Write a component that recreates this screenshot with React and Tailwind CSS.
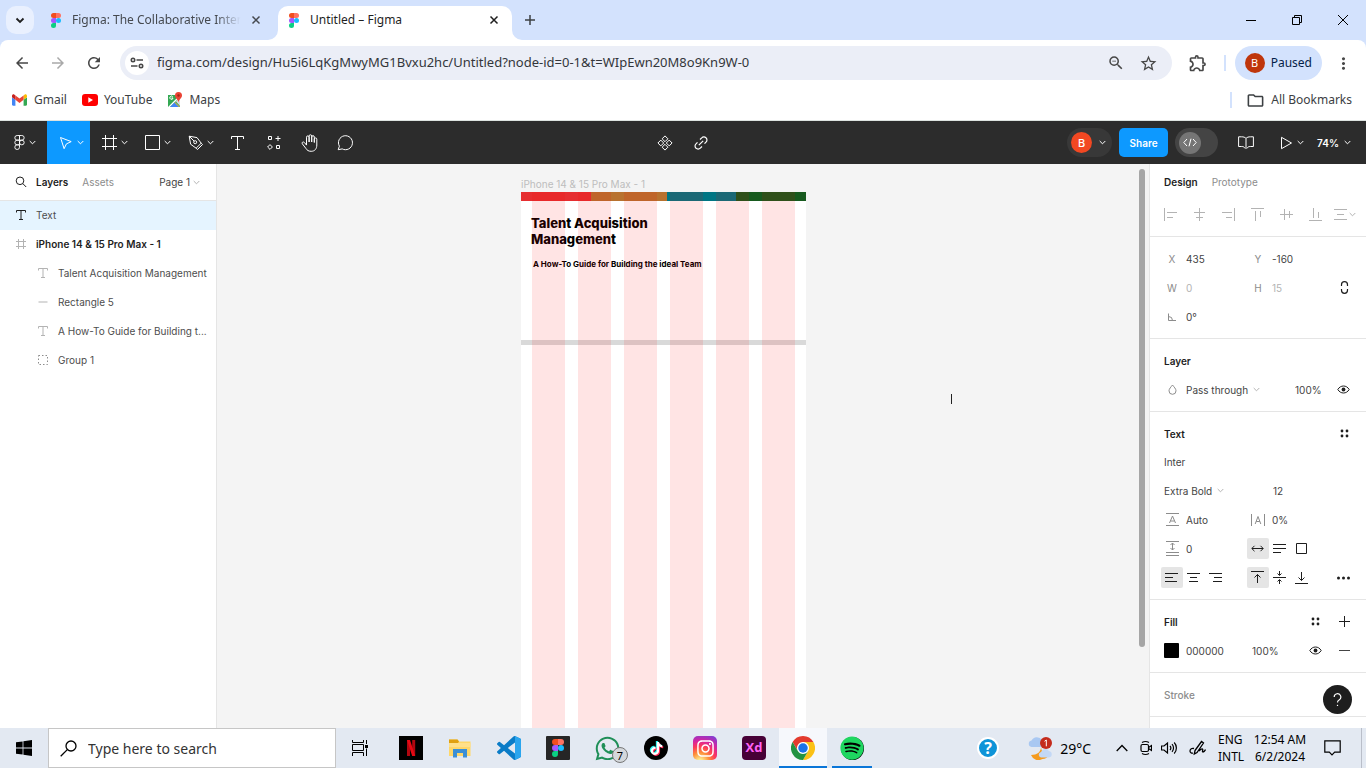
import React from "react";
import {
  MdArrowBack, MdArrowForward, MdRefresh, MdStarBorder, MdZoomOut, MdOutlineExtension,
  MdMoreVert, MdOutlineFolder,
} from "react-icons/md";
import { FaWhatsapp, FaTiktok, FaInstagram, FaSpotify } from "react-icons/fa";

/* ---------- shared drawings ---------- */

function Icon({ w = 16, h = w, children, className = "", sw = 1, box }) {
  return (
    <svg
      width={w}
      height={h}
      viewBox={box || `0 0 ${w} ${h}`}
      fill="none"
      stroke="currentColor"
      strokeWidth={sw}
      aria-hidden="true"
      className={`shrink-0 ${className}`}
    >
      {children}
    </svg>
  );
}

const figmaParts = [
  ["M0 9.5A9.5 9.5 0 0 0 9.5 19H19V0H9.5A9.5 9.5 0 0 0 0 9.5z", "#F24E1E"],
  ["M19 0v19h9.5a9.5 9.5 0 1 0 0-19H19z", "#FF7262"],
  ["M0 28.5A9.5 9.5 0 0 0 9.5 38H19V19H9.5A9.5 9.5 0 0 0 0 28.5z", "#A259FF"],
  ["M19 28.5a9.5 9.5 0 1 1 19 0 9.5 9.5 0 0 1-19 0z", "#1ABCFE"],
  ["M0 47.5A9.5 9.5 0 0 1 9.5 38H19v9.5a9.5 9.5 0 1 1-19 0z", "#0ACF83"],
];

function FigmaLogo({ w = 10, h = 15 }) {
  return (
    <Icon w={w} h={h} box="0 0 38 57">
      {figmaParts.map(([d, c]) => <path key={c} d={d} fill={c} stroke="none" />)}
    </Icon>
  );
}

function Chev({ className = "" }) {
  return <Icon w={7} h={5} className={className}><path d="M.7 1l2.8 2.8L6.3 1" /></Icon>;
}

function Cross() {
  return <Icon w={10} sw={1.5}><path d="M1.5 1.5l7 7M8.5 1.5l-7 7" /></Icon>;
}

function TypeIcon({ className = "" }) {
  return (
    <Icon w={12} h={12} className={className}>
      <path d="M1.5 3.5v-2h9v2M6 1.5v9M4 10.5h4" />
    </Icon>
  );
}

function Eye() {
  return (
    <Icon w={13} h={9}>
      <path d="M.8 4.5C2.2 2.2 4.2 1 6.500 1s4.300 1.200 5.700 3.500C10.800 6.800 8.800 8 6.500 8S2.200 6.800.800 4.500z" />
      <circle cx="6.500" cy="4.500" r="1.900" fill="currentColor" stroke="none" />
    </Icon>
  );
}

function FourDots() {
  return (
    <Icon w={9} h={9}>
      <g fill="currentColor" stroke="none">
        <circle cx="2" cy="2" r="1.4" /><circle cx="7" cy="2" r="1.4" />
        <circle cx="2" cy="7" r="1.4" /><circle cx="7" cy="7" r="1.4" />
      </g>
    </Icon>
  );
}

/* ---------- browser ---------- */

function TabStrip() {
  return (
    <div className="flex h-10 bg-[#d3e2fd] text-[12px] text-[#1f1f1f]">
      <button aria-label="Search tabs" className="ml-1.5 mt-1.5 flex size-7 items-center justify-center rounded-[10px] bg-[#e9f0fe]">
        <Icon w={10} h={7} sw={1.8}><path d="M1.500 1.500L5 5l3.500-3.500" /></Icon>
      </button>
      <div className="mt-1.5 flex h-7 w-[234px] items-center pl-[17px] pr-[7px]">
        <FigmaLogo />
        <span className="ml-[11px] w-[172px] whitespace-nowrap text-[#45494f] [mask-image:linear-gradient(to_right,black_84%,transparent_98%)]">
          Figma: The Collaborative Inter
        </span>
        <button aria-label="Close tab" className="ml-auto text-[#45494f]"><Cross /></button>
      </div>
      <Icon w={10} h={10} className="mt-[30px]"><path d="M10 0v10H0A10 10 0 0 0 10 0z" fill="white" stroke="none" /></Icon>
      <div className="mt-1.5 flex w-[234px] items-center rounded-t-[10px] bg-white pb-1.5 pl-[11px] pr-[13px]">
        <FigmaLogo />
        <span className="ml-[11px] whitespace-nowrap">Untitled – Figma</span>
        <button aria-label="Close tab" className="ml-auto"><Cross /></button>
      </div>
      <Icon w={10} h={10} className="mt-[30px]"><path d="M0 0v10h10A10 10 0 0 1 0 0z" fill="white" stroke="none" /></Icon>
      <button aria-label="New tab" className="flex w-4 items-center justify-center text-[#3c4043]">
        <Icon w={12} sw={1.500}><path d="M6 1v10M1 6h10" /></Icon>
      </button>
      <div className="ml-auto flex text-black">
        <button aria-label="Minimise" className="flex w-[46px] items-center justify-center"><Icon w={10}><path d="M0 5.500h10" /></Icon></button>
        <button aria-label="Restore" className="flex w-[46px] items-center justify-center">
          <Icon w={10}><path d="M.5 2.500h7v7h-7zM2.500 2.500v-2h7v7h-2" /></Icon>
        </button>
        <button aria-label="Close" className="flex w-[46px] items-center justify-center"><Icon w={10}><path d="M0 0l10 10M10 0L0 10" /></Icon></button>
      </div>
    </div>
  );
}

function AddressRow() {
  return (
    <div className="flex bg-[#d3e2fd]">
      <div className="flex h-[46px] min-w-0 flex-1 items-center rounded-t-lg bg-white pl-[13px] text-[#474747]">
        <button aria-label="Back" className="w-9"><MdArrowBack size={18} /></button>
        <button aria-label="Forward" className="w-9 text-[#a9a9a9]"><MdArrowForward size={18} /></button>
        <button aria-label="Reload" className="w-[35px]"><MdRefresh size={18} /></button>
        <div className="flex h-[34px] min-w-0 flex-1 items-center rounded-full bg-[#ebeef7] pl-[5px] pr-3.5">
          <button aria-label="Site information" className="flex size-6 items-center justify-center rounded-full bg-white">
            <Icon w={14} h={12} sw={1.600}>
              <circle cx="3" cy="3" r="1.700" /><path d="M6.500 3H13M1 9h6.500" /><circle cx="11" cy="9" r="1.700" />
            </Icon>
          </button>
          <input
            aria-label="Address"
            className="ml-2 min-w-0 flex-1 bg-transparent text-[13px] text-[#33363b] outline-none"
            defaultValue="figma.com/design/Hu5i6LqKgMwyMG1Bvxu2hc/Untitled?node-id=0-1&t=WIpEwn20M8o9Kn9W-0"
          />
          <button aria-label="Zoom" className="mr-3.5"><MdZoomOut size={18} /></button>
          <button aria-label="Bookmark this page"><MdStarBorder size={19} /></button>
        </div>
        <button aria-label="Extensions" className="ml-4 mr-4"><MdOutlineExtension size={20} /></button>
        <span className="h-4 w-0.5 bg-[#d3e2fd]" />
        <button className="ml-[9px] flex h-[34px] items-center gap-1.5 rounded-full bg-[#d3e2fd] px-2.5 text-[12px] text-[#041e49]">
          <span className="flex size-5 items-center justify-center rounded-full bg-[#bf360c] text-[11px] text-white">B</span>
          Paused
        </button>
        <button aria-label="Menu" className="ml-3 mr-[13px]"><MdMoreVert size={19} /></button>
      </div>
    </div>
  );
}

function Bookmarks() {
  return (
    <div className="flex h-[35px] items-center border-b border-[#dde3e0] bg-white pb-1.5 pl-3 pr-3.5 text-[12px] text-[#3c4043]">
      <a href="#gmail" className="flex items-center gap-[7px]">
        <Icon w={15} h={12} box="52 42 88 66">
          <g stroke="none">
            <path fill="#4285f4" d="M58 108h14V74L52 59v43c0 3.320 2.690 6 6 6" />
            <path fill="#34a853" d="M120 108h14c3.320 0 6-2.690 6-6V59l-20 15" />
            <path fill="#fbbc04" d="M120 48v26l20-15v-8c0-7.420-8.470-11.650-14.400-7.200" />
            <path fill="#ea4335" d="M72 74V48l24 18 24-18v26L96 92" />
            <path fill="#c5221f" d="M52 51v8l20 15V48l-5.600-4.200c-5.940-4.450-14.400-.220-14.400 7.200" />
          </g>
        </Icon>
        Gmail
      </a>
      <a href="#youtube" className="ml-[15px] flex items-center gap-1.5">
        <Icon w={16} h={12}><rect width="16" height="12" rx="3" fill="#f00" stroke="none" /><path d="M6.300 3.300v5.400L11 6z" fill="#fff" stroke="none" /></Icon>
        YouTube
      </a>
      <a href="#maps" className="ml-[15px] flex items-center gap-1.5">
        <Icon w={16} h={16}>
          <g stroke="none">
            <path d="M1 3h12v12H1z" fill="#34a853" />
            <path d="M1 15L13 3v2L3 15z" fill="#fff" />
            <path d="M3 15l5-5 5 5z" fill="#4285f4" />
            <path d="M13 5v9L9 9.500z" fill="#dadce0" />
            <path d="M8 10l5 5h-1L7.500 10.500z" fill="#fbbc04" />
            <path d="M11.500 0a3.500 3.500 0 0 0-3.500 3.500C8 6.200 11 7 11.500 10.500 12 7 15 6.200 15 3.500A3.500 3.500 0 0 0 11.500 0z" fill="#ea4335" />
            <circle cx="11.500" cy="3.500" r="1.200" fill="#a52714" />
          </g>
          <path d="M5.800 4.900a1.600 1.600 0 1 0 .2 1.100H4.500" stroke="#fff" />
        </Icon>
        Maps
      </a>
      <span className="ml-auto h-4 w-0.5 bg-[#d3e2fd]" />
      <a href="#bookmarks" className="ml-3.5 flex items-center gap-1.5">
        <MdOutlineFolder size={19} />
        All Bookmarks
      </a>
    </div>
  );
}

/* ---------- editor toolbar ---------- */

function Tool({ label, className = "", chev, children }) {
  return (
    <button aria-label={label} className={`flex h-full items-center justify-center text-white ${className}`}>
      {children}
      {chev && <Chev className="ml-1" />}
    </button>
  );
}

function Toolbar() {
  return (
    <div className="flex h-[43px] bg-[#2c2c2c] text-[10px] text-white">
      <div className="flex flex-1">
        <Tool label="Main menu" chev className="w-[47px] pl-0.5">
          <Icon w={11} h={15} box="-2 -2 42 61" sw={3.800}>
            {figmaParts.map(([d, c]) => <path key={c} d={d} />)}
          </Icon>
        </Tool>
        <Tool label="Move" chev className="w-[43px] bg-[#0d99ff] pl-1.5">
          <Icon w={14}><path d="M1.500 1.500l3.600 11.200 2.300-4.800 4.800-2.300z" /></Icon>
        </Tool>
        <Tool label="Frame" chev className="w-[43px] pl-1.5">
          <Icon w={15}><path d="M3.500 0v15M11.500 0v15M0 3.500h15M0 11.500h15" /></Icon>
        </Tool>
        <Tool label="Rectangle" chev className="w-[43px] pl-1.5">
          <Icon w={15}><path d="M.5.5h14v14H.5z" /></Icon>
        </Tool>
        <Tool label="Pen" chev className="w-[43px] pl-1.5">
          <Icon w={15}>
            <path d="M1.200 1.200l1.400 8 5.500 4 5.100-5-4.200-5.600z" />
            <path d="M8.100 13.200l1.400 1.300 5-5-1.300-1.300M1.200 1.200l5 5" />
            <circle cx="7.200" cy="7.200" r="1.500" />
          </Icon>
        </Tool>
        <Tool label="Text" className="w-9">
          <Icon w={13} h={16}><path d="M.5 4V1.500h12V4M6.500 1.500v13M4 14.500h5" /></Icon>
        </Tool>
        <Tool label="Resources" className="w-9 pl-0.5">
          <Icon w={14}>
            <path d="M1.500.5h3v3h-3zM9.500 9.500h3v3h-3zM11 0v5M8.500 2.500h5M3 8.600L5.400 11 3 13.400.6 11z" />
          </Icon>
        </Tool>
        <Tool label="Hand tool" className="w-9">
          <Icon w={17} h={18}>
            <path d="M5.500 9.500V3.200a1.300 1.300 0 0 1 2.600 0V8M8.100 8V2.100a1.300 1.300 0 0 1 2.600 0V8M10.700 8V3a1.300 1.300 0 0 1 2.600 0v5.500M13.300 8.500V5.200a1.250 1.250 0 0 1 2.500 0V11c0 3.800-2 6.300-5.600 6.300-2.700 0-4.200-1-5.400-3L1.300 9.800c-.8-1.500 1-2.500 2.100-1.300l2.100 2.600V8" />
          </Icon>
        </Tool>
        <Tool label="Comment" className="w-9">
          <Icon w={17} h={16}>
            <path d="M1.200 14.700l1.200-3.500A7 7 0 1 1 5.200 13.900z" />
          </Icon>
        </Tool>
      </div>
      <div className="flex">
        <Tool label="Component" className="w-9">
          <Icon w={16}>
            <path d="M8 .9l2.900 2.900L8 6.700 5.100 3.800zM8 9.300l2.900 2.900L8 15.100l-2.900-2.900zM3.800 5.100L6.700 8l-2.900 2.900L.9 8zM12.200 5.100L15.100 8l-2.900 2.900L9.300 8z" />
          </Icon>
        </Tool>
        <Tool label="Link" className="w-9">
          <Icon w={14} sw={1.200}>
            <path d="M6 3.500l1.700-1.700a2.900 2.900 0 0 1 4.300 0 2.900 2.900 0 0 1 0 4.300L10.500 7.700M8 10.500l-1.700 1.700a2.900 2.900 0 0 1-4.300 0 2.900 2.900 0 0 1 0-4.300l1.500-1.600M4.800 9.200l4.400-4.400" />
          </Icon>
        </Tool>
      </div>
      <div className="flex flex-1 items-center justify-end">
        <button aria-label="Account" className="mr-[7px] flex h-[29px] w-[45px] items-center rounded-full bg-[#383838] pl-1">
          <span className="flex size-[21px] items-center justify-center rounded-full bg-[#f24822] text-[11px] font-medium">B</span>
          <Chev className="ml-[7px]" />
        </button>
        <button className="mr-[7px] h-[29px] w-[49px] rounded-[5px] bg-[#0d99ff] font-semibold">Share</button>
        <button role="switch" aria-checked="false" aria-label="Dev Mode" className="flex h-[29px] w-[43px] items-center rounded-full bg-[#444] pl-1">
          <span className="flex size-[22px] items-center justify-center rounded-full bg-[#757575]">
            <Icon w={14} h={9}><path d="M4 1L.8 4.500 4 8M10 1l3.200 3.500L10 8M8 .7l-2 7.600" /></Icon>
          </span>
        </button>
        <Tool label="Libraries" className="ml-2.5 w-9">
          <Icon w={16} h={13}>
            <path d="M8 2.500C7 1.200 5.500.8 3.500.8H.6v9.700h3.100c1.800 0 2.300.4 3 1.500h2.600c.7-1.100 1.200-1.500 3-1.500h3.100V.8h-2.900C10.500.8 9 1.200 8 2.500zM8 2.500V11" />
          </Icon>
        </Tool>
        <Tool label="Present" chev className="ml-1.5 w-[43px]">
          <Icon w={13} h={14}><path d="M1.500 1.300v11.400L11.500 7z" /></Icon>
        </Tool>
        <button className="ml-1 mr-[15px] flex items-center gap-[5px] font-semibold">
          74% <Chev />
        </button>
      </div>
    </div>
  );
}

/* ---------- layers ---------- */

const layers = [
  { name: "Text", kind: "type", active: true },
  { name: "iPhone 14 & 15 Pro Max - 1", kind: "frame", strong: true },
  { name: "Talent Acquisition Management", kind: "type", child: true },
  { name: "Rectangle 5", kind: "line", child: true },
  { name: "A How-To Guide for Building t...", kind: "type", child: true },
  { name: "Group 1", kind: "group", child: true },
];

function LayerIcon({ kind, active }) {
  const tone = active ? "text-[#1e1e1e]" : "text-[#b3b3b3]";
  if (kind === "type") return <TypeIcon className={tone} />;
  if (kind === "frame") return <Icon w={12} className={tone}><path d="M3.500 1v10M8.500 1v10M1 3.500h10M1 8.500h10" /></Icon>;
  if (kind === "line") return <Icon w={12} className={tone}><path d="M1.500 6h9" /></Icon>;
  return <Icon w={12} className="text-[#8c8c8c]"><path strokeDasharray="1.500 2" d="M1.500 1.500h9v9h-9z" /></Icon>;
}

function LayersPanel() {
  return (
    <aside className="w-[217px] shrink-0 border-r border-[#e5e5e5] bg-white">
      <div className="flex h-[37px] items-center border-b border-[#e5e5e5] pl-[15px] pr-4">
        <button aria-label="Find">
          <Icon w={12} className="text-[#1e1e1e]"><circle cx="5" cy="4.800" r="3.800" /><path d="M7.800 7.600l3.400 3.400" /></Icon>
        </button>
        <button className="ml-[9px] font-semibold text-[#1e1e1e]">Layers</button>
        <button className="ml-3.5 text-[#8c8c8c]">Assets</button>
        <button className="ml-auto flex items-center gap-[3px] text-[#444]">
          Page 1 <Chev className="text-[#b3b3b3]" />
        </button>
      </div>
      <ul className="grid h-[173px] grid-rows-6">
        {layers.map((l) => (
          <li key={l.name} className="min-w-0">
            <button
              className={`flex h-full w-full items-center gap-[9px] whitespace-nowrap text-left ${l.child ? "pl-[37px]" : "pl-[15px]"} ${l.active ? "bg-[#e5f4ff]" : ""} ${l.strong ? "font-semibold text-[#1e1e1e]" : "text-[#4d4d4d]"}`}
            >
              <LayerIcon kind={l.kind} active={l.active} />
              {l.name}
            </button>
          </li>
        ))}
      </ul>
    </aside>
  );
}

/* ---------- canvas ---------- */

function Canvas() {
  return (
    <main className="relative min-w-0 flex-1 overflow-hidden bg-[#f4f4f4] font-['Inter',sans-serif]">
      <div className="absolute left-[304px] top-[13px] whitespace-nowrap text-[10px] leading-[15px] text-[#bdbdbd]">iPhone 14 & 15 Pro Max - 1</div>
      <section className="absolute bottom-0 left-[304px] top-7 w-[285px] bg-white">
        <div className="flex h-[9px]">
          <span className="w-[70px] bg-[#e62e30]" />
          <span className="w-[76px] bg-[#b8722f]" />
          <span className="w-[69px] bg-[#007583]" />
          <span className="flex-1 bg-[#175a1e]" />
        </div>
        <h1 className="ml-2.5 mt-3.5 w-40 text-[13px] font-extrabold leading-4 text-black">Talent Acquisition Management</h1>
        <p className="ml-3 mt-[9px] whitespace-nowrap text-[8px] font-bold leading-4 text-black">A How-To Guide for Building the ideal Team</p>
        <div className="mt-[68px] h-[5px] bg-[#d9d9d9]" />
        <div className="absolute inset-0 flex gap-[13px] pl-[11px]">
          {[0, 1, 2, 3, 4, 5].map((i) => <span key={i} className="w-[33px] bg-[rgba(255,0,0,0.105)]" />)}
        </div>
      </section>
      <span className="absolute left-[734px] top-[230px] h-2.5 w-px bg-[#222]" />
      <span className="absolute right-1 top-[5px] h-[478px] w-1.5 rounded-full bg-[#a6a6a6]" />
    </main>
  );
}

/* ---------- design panel ---------- */

function Row({ children, className = "" }) {
  return <div className={`flex h-[29px] items-center ${className}`}>{children}</div>;
}

function Section({ children }) {
  return <section className="border-b border-[#e5e5e5] py-[7px] pl-3.5 pr-4">{children}</section>;
}

function Field({ id, mark, label, value, dim, className = "" }) {
  return (
    <div className={`flex w-[86px] items-center ${className}`}>
      <label htmlFor={id} aria-label={label} className="flex w-4 shrink-0 justify-center text-[#8c8c8c]">{mark}</label>
      <input id={id} defaultValue={value} className={`ml-1.5 w-12 bg-transparent outline-none ${dim ? "text-[#b3b3b3]" : "text-[#444]"}`} />
    </div>
  );
}

function SmallSelect({ label, value }) {
  return (
    <span className="flex items-center gap-1">
      <select aria-label={label} className="appearance-none bg-transparent text-[#444] outline-none">
        <option>{value}</option>
      </select>
      <Chev className="text-[#b3b3b3]" />
    </span>
  );
}

function Seg({ label, d, on }) {
  return (
    <button aria-label={label} aria-pressed={!!on} className={`flex h-[21px] w-[22px] items-center justify-center rounded-[2px] pr-px ${on ? "bg-[#e5e5e5]" : ""}`}>
      <Icon w={13}><path d={d} /></Icon>
    </button>
  );
}

const aligns = [
  ["Align left", "M.5 0v13M3 4.500h10M3 9.500h6"],
  ["Align horizontal centers", "M6.500 0v13M1 4.500h11M3 9.500h7"],
  ["Align right", "M12.500 0v13M0 4.500h10M4 9.500h6"],
  ["Align top", "M0 .5h13M4.500 3v10M9.500 3v6"],
  ["Align vertical centers", "M0 6.500h13M4.500 1v11M9.500 3v7"],
  ["Align bottom", "M0 12.500h13M4.500 0v10M9.500 4v6"],
];

function DesignPanel() {
  return (
    <aside className="relative w-[217px] shrink-0 overflow-hidden border-l border-[#e5e5e5] bg-white text-[#444]">
      <div className="flex h-9 items-center gap-3.5 pl-3.5">
        <button className="font-semibold text-[#1e1e1e]">Design</button>
        <button className="text-[#8c8c8c]">Prototype</button>
      </div>
      <div className="flex h-[37px] items-start gap-4 border-b border-[#e5e5e5] pl-3.5 pr-[11px] pt-2 text-[#b3b3b3]">
        {aligns.map(([label, d]) => (
          <button key={label} aria-label={label}><Icon w={13}><path d={d} /></Icon></button>
        ))}
        <button aria-label="Tidy up" className="-ml-1 flex h-[13px] items-center gap-0.5">
          <Icon w={13}><path d="M0 1.500h13M3 6.500h7M0 11.500h13" /></Icon>
          <Chev />
        </button>
      </div>

      <Section>
        <Row>
          <Field id="x" mark="X" value="435" />
          <Field id="y" mark="Y" value="-160" />
        </Row>
        <Row>
          <Field id="w" mark="W" value="0" dim />
          <Field id="h" mark="H" value="15" dim />
          <button aria-label="Constrain proportions" className="ml-auto text-[#1e1e1e]">
            <Icon w={11} h={13} sw={1.200}><path d="M2.500 5V3.700a3 3 0 0 1 6 0V5M2.500 8v1.300a3 3 0 0 0 6 0V8" /></Icon>
          </button>
        </Row>
        <Row>
          <Field id="angle" label="Rotation" value="0°" mark={<Icon w={8} h={8}><path d="M.5.5v7H8M.5 3.500a4 4 0 0 1 4 4" /></Icon>} />
        </Row>
      </Section>

      <Section>
        <Row><h2 className="font-semibold text-[#1e1e1e]">Layer</h2></Row>
        <Row>
          <span className="mr-1.5 flex w-4 justify-center text-[#8c8c8c]">
            <Icon w={9} h={11}><path d="M4.500 1C3 3 1 4.800 1 6.800a3.500 3.500 0 0 0 7 0C8 4.800 6 3 4.500 1z" /></Icon>
          </span>
          <SmallSelect label="Blend mode" value="Pass through" />
          <input aria-label="Layer opacity" defaultValue="100%" className="ml-auto w-[30px] bg-transparent outline-none" />
          <button aria-label="Hide layer" className="ml-3 text-[#1e1e1e]"><Eye /></button>
        </Row>
      </Section>

      <Section>
        <Row>
          <h2 className="font-semibold text-[#1e1e1e]">Text</h2>
          <button aria-label="Text styles" className="ml-auto mr-px text-[#1e1e1e]"><FourDots /></button>
        </Row>
        <div className="flex h-7 items-center">
          <input aria-label="Font family" defaultValue="Inter" className="w-28 bg-transparent outline-none" />
        </div>
        <Row>
          <span className="w-[109px]"><SmallSelect label="Font weight" value="Extra Bold" /></span>
          <input aria-label="Font size" defaultValue="12" className="w-12 bg-transparent outline-none" />
        </Row>
        <Row>
          <Field id="lh" label="Line height" value="Auto" mark={<Icon w={13}><path d="M0 .5h13M0 12.500h13M3.500 10L6.500 3l3 7M4.500 8h4" /></Icon>} />
          <Field id="ls" label="Letter spacing" value="0%" mark={<Icon w={14} h={12}><path d="M.5 0v12M13.500 0v12M4.200 10L7 2.500 9.800 10M5.200 7.500h3.600" /></Icon>} />
        </Row>
        <Row>
          <Field id="ps" label="Paragraph spacing" value="0" mark={<Icon w={13} h={15}><path d="M0 .5h13M0 11.500h13M0 14.500h13M6.500 2v7M4.500 4l2-2 2 2M4.500 7l2 2 2-2" /></Icon>} />
          <div className="flex text-[#1e1e1e]">
            <span className="-ml-[3px] flex">
              <Seg on label="Auto width" d="M1 6.500h11M3.500 3.800L.8 6.500l2.700 2.700M9.500 3.800l2.700 2.700-2.700 2.700" />
              <Seg label="Auto height" d="M0 2.500h13M0 6.500h13M0 10.500h8" />
              <Seg label="Fixed size" d="M1.500 1.500h10v10h-10z" />
            </span>
          </div>
        </Row>
        <Row className="text-[#1e1e1e]">
          <span className="-ml-[3px] flex w-[89px]">
            <Seg on label="Text align left" d="M0 2.500h13M0 6.500h8M0 10.500h12" />
            <Seg label="Text align center" d="M0 2.500h13M3 6.500h7M2 10.500h9" />
            <Seg label="Text align right" d="M0 2.500h13M5 6.500h8M4 10.500h9" />
          </span>
          <span className="-ml-[3px] flex">
            <Seg on label="Align top" d="M0 .5h13M6.500 12V3.500M3.500 6.500l3-3 3 3" />
            <Seg label="Align middle" d="M0 6.500h13M6.500 0v4M4.500 2.500l2 2 2-2M6.500 13V9M4.500 10.500l2-2 2 2" />
            <Seg label="Align bottom" d="M0 12.500h13M6.500 1v8.500M3.500 6.500l3 3 3-3" />
          </span>
          <button aria-label="Type settings" className="-mr-px ml-auto">
            <Icon w={15} h={4}><g fill="currentColor" stroke="none"><circle cx="2.500" cy="2" r="1.500" /><circle cx="7.500" cy="2" r="1.500" /><circle cx="12.500" cy="2" r="1.500" /></g></Icon>
          </button>
        </Row>
      </Section>

      <Section>
        <Row className="text-[#1e1e1e]">
          <h2 className="font-semibold">Fill</h2>
          <button aria-label="Fill styles" className="ml-auto mr-[19px]"><FourDots /></button>
          <button aria-label="Add fill"><Icon w={11}><path d="M5.500 0v11M0 5.500h11" /></Icon></button>
        </Row>
        <Row>
          <button aria-label="Fill colour" className="h-[15px] w-[15px] rounded-[1px] bg-black" />
          <input aria-label="Fill hex" defaultValue="000000" className="ml-[7px] w-[66px] bg-transparent outline-none" />
          <input aria-label="Fill opacity" defaultValue="100%" className="w-10 bg-transparent outline-none" />
          <button aria-label="Hide fill" className="ml-auto mr-[17px] text-[#1e1e1e]"><Eye /></button>
          <button aria-label="Remove fill"><Icon w={11}><path d="M0 5.500h11" /></Icon></button>
        </Row>
      </Section>

      <Section>
        <Row><h2 className="font-medium text-[#8c8c8c]">Stroke</h2></Row>
      </Section>
      <button aria-label="Help" className="absolute bottom-3.5 right-3.5 flex size-[29px] items-center justify-center rounded-full bg-[#1e1e1e] text-white">
        <Icon w={9} h={14} sw={1.200}><path d="M1.200 4a3.300 3.300 0 1 1 4.900 2.900C5 7.500 4.500 8 4.500 9.500" /><path d="M4.500 11.800v1.200" /></Icon>
      </button>
    </aside>
  );
}

/* ---------- taskbar ---------- */

function App24({ label, children, className = "" }) {
  return (
    <button aria-label={label} className={`relative flex h-full w-12 items-center justify-center ${className}`}>
      {children}
    </button>
  );
}

function Taskbar() {
  return (
    <footer className="flex h-10 shrink-0 items-center bg-[#e3e9f2] text-[12px] text-black">
      <button aria-label="Start" className="flex w-12 justify-center">
        <Icon w={16} h={16}><path d="M0 2.300l6.600-.9v6.200H0zM7.400 1.300L16 0v7.600H7.400zM0 8.400h6.600v6.200L0 13.700zM7.400 8.400H16V16l-8.600-1.200z" fill="#000" stroke="none" /></Icon>
      </button>
      <label className="flex h-10 w-72 items-center border border-[#c6c6c6] bg-white pl-[11px]">
        <Icon w={17} h={17} sw={1.300}><circle cx="11" cy="6" r="5" /><path d="M7.300 9.600L.7 16.300" /></Icon>
        <input aria-label="Search" placeholder="Type here to search" className="ml-[11px] w-52 bg-transparent text-[14px] outline-none placeholder:text-[#333]" />
      </label>
      <App24 label="Task view">
        <Icon w={17} h={16}><path d="M.5 0v2.500h11V0M.5 4.500h11v6H.5zM.5 16v-3.500h11V16M14.500 0v4M14.500 8.500V16" /><path d="M13 5h3v3h-3z" fill="currentColor" stroke="none" /></Icon>
      </App24>
      <div className="ml-[3px] flex h-full gap-px">
        <App24 label="Netflix">
          <Icon w={24} h={24}>
            <path d="M0 0h24v24H0z" fill="#000" stroke="none" />
            <path d="M8 4h3v16H8zM13.200 4h3v16h-3z" fill="#b1060f" stroke="none" />
            <path d="M8 4h3l5.200 16h-3z" fill="#e50914" stroke="none" />
          </Icon>
        </App24>
        <App24 label="File Explorer">
          <Icon w={22} h={19}>
            <g stroke="none">
              <path d="M0 .5h8.500l1.500 2h11.500V17H0z" fill="#ffd768" />
              <path d="M0 .5h8.500l1.500 2L9 4H0z" fill="#e0a111" />
              <path d="M0 4h21.500v4H0z" fill="#ffe08a" />
              <path d="M4 10h14v8.500h-4V14H8v4.500H4z" fill="#3b8fd6" />
            </g>
          </Icon>
        </App24>
        <App24 label="Visual Studio Code">
          <Icon w={24} h={24}>
            <g stroke="none">
              <path fill="#0a7cc7" d="M23.150 2.587L18.210.210a1.494 1.494 0 0 0-1.705.290l-9.460 8.630-4.120-3.128a.999.999 0 0 0-1.276.057L.327 7.261A1 1 0 0 0 .326 8.740L3.899 12 .326 15.260a1 1 0 0 0 .001 1.479L1.650 17.940a.999.999 0 0 0 1.276.057l4.120-3.128 9.460 8.630a1.492 1.492 0 0 0 1.704.290l4.942-2.377A1.500 1.500 0 0 0 24 20.060V3.939a1.500 1.500 0 0 0-.850-1.352zm-5.146 14.861L10.826 12l7.178-5.448v10.896z" />
              <path fill="#2aa5ee" d="M18 .1l5.150 2.487A1.500 1.500 0 0 1 24 3.940v16.120a1.500 1.500 0 0 1-.850 1.350L18 23.900z" />
            </g>
          </Icon>
        </App24>
        <App24 label="Figma">
          <span className="flex size-6 items-center justify-center rounded-[1px] bg-[#262626]"><FigmaLogo w={12} h={18} /></span>
        </App24>
        <App24 label="WhatsApp, 7 unread">
          <FaWhatsapp size={27} className="text-[#1f8f58]" />
          <span className="absolute right-[3px] top-[19px] flex size-4 items-center justify-center rounded-full border border-[#777] bg-[#d4d8dc] text-[11px] leading-none">7</span>
        </App24>
        <App24 label="TikTok">
          <span className="flex size-6 items-center justify-center rounded-full bg-black text-white">
            <FaTiktok size={13} className="[filter:drop-shadow(1px_1px_0_#fe2c55)_drop-shadow(-1px_-1px_0_#25f4ee)]" />
          </span>
        </App24>
        <App24 label="Instagram">
          <span className="flex size-6 items-center justify-center rounded-[5px] bg-[radial-gradient(circle_at_30%_107%,#fdf497_5%,#fd8f3a_30%,#fd3a58_50%,#d6249f_68%,#6a45e0_100%)] text-white">
            <FaInstagram size={19} />
          </span>
        </App24>
        <App24 label="Adobe XD">
          <span className="flex size-6 items-center justify-center rounded-[4px] bg-[#470137] font-['Open_Sans',sans-serif] text-[13px] font-bold text-[#ff61f6]">Xd</span>
        </App24>
        <App24 label="Chrome" className="border-b-2 border-[#0a76d8] bg-[#f6f8fc] pt-0.5">
          <Icon w={24} h={24} box="0 0 48 48">
            <g stroke="none">
              <circle cx="24" cy="24" r="12" fill="#fff" />
              <path fill="#e33b2e" d="M24 12h20.781A23.994 23.994 0 0 0 3.216 12.003L13.608 30l.009-.002A11.985 11.985 0 0 1 24 12" />
              <path fill="#fbc116" d="M34.391 30.003L24.001 48A23.994 23.994 0 0 0 44.780 12.003H23.999l-.003.007a11.985 11.985 0 0 1 10.395 17.993" />
              <path fill="#229342" d="M13.609 30.003L3.218 12.006A23.994 23.994 0 0 0 24.003 48l10.390-17.997-.006-.005a11.985 11.985 0 0 1-20.778.005" />
              <circle cx="24" cy="24" r="9.500" fill="#1a73e8" />
            </g>
          </Icon>
        </App24>
        <App24 label="Spotify">
          <span className="flex size-[23px] rounded-full bg-black"><FaSpotify size={24} className="-m-px text-[#1ed760]" /></span>
          <span className="absolute bottom-0 h-0.5 w-10 bg-[#0a76d8]" />
        </App24>
      </div>
      <div className="ml-auto flex h-full items-center">
        <button aria-label="Get help" className="mr-[29px]">
          <span className="flex size-[22px] items-center justify-center rounded-full border-2 border-white bg-[#0f94d8] text-[16px] font-bold text-white">?</span>
        </button>
        <button className="flex items-center gap-1.5 text-[14px]">
          <Icon w={26} h={23}>
            <g stroke="none">
              <path d="M13 10a8 8 0 0 0 8 8 8 8 0 0 1-6.500 4A8 8 0 0 1 3 18c6 0 10-3 10-8z" fill="#f59b1f" />
              <path d="M3.500 10a3.300 3.300 0 0 1 0-6.500A6 6 0 0 1 14 3v7z" fill="#a9c8f2" />
              <path d="M13 20.500a2.800 2.800 0 0 1 0-5.500 4.500 4.500 0 0 1 8-1 3.300 3.300 0 0 1 0 6.500z" fill="#c3d8f6" />
              <circle cx="18" cy="6" r="6" fill="#c42b1c" />
            </g>
            <path d="M16.500 4.300L18.300 3v6.300" stroke="#fff" />
          </Icon>
          29°C
        </button>
        <button aria-label="Show hidden icons" className="ml-[25px]"><Icon w={12} h={8} sw={1.300}><path d="M.7 7L6 1.500 11.300 7" /></Icon></button>
        <button aria-label="Meet now" className="ml-3">
          <Icon w={12} h={16} sw={1.200}><rect x="1" y="4.500" width="7.500" height="7" rx="1.500" /><path d="M8.500 7.500l3-2v5l-3-2M2 2.500Q5.500.5 9 2.500M2 13.500q3.500 2 7 0" /></Icon>
        </button>
        <button aria-label="Volume" className="ml-[9px]">
          <Icon w={18} h={14} sw={1.200}><path d="M.5 5v4h2.500L6.500 12V2L3 5zM9 5a3 3 0 0 1 0 4M11 3.200a5.500 5.500 0 0 1 0 7.600M13.200 1.500a8 8 0 0 1 0 11" /></Icon>
        </button>
        <button aria-label="Pen menu" className="ml-2.5">
          <Icon w={17} h={16} sw={1.300}><path d="M5 8.500c-2-.5-4 .5-4 2.500 0 1.500 1.500 2.500 3 2M6 10.500L12.500 1.500l2 1.500L8 12.500 5.300 14zM10 11c1.500-1.500 2.500-2.500 3.500-2s-1 3 .5 3 2-1.500 2.500-2.500" /></Icon>
        </button>
        <div className="ml-3 w-6 text-center leading-[17px]">ENG<br />INTL</div>
        <div className="ml-2.5 w-14 whitespace-nowrap text-center leading-[17px]">12:54 AM<br />6/2/2024</div>
        <button aria-label="Notifications" className="ml-4 mr-5">
          <Icon w={17} h={16} sw={1.200}><path d="M.8.800h15.400v11.400h-5.500L8 15l-2.700-2.800H.8z" /></Icon>
        </button>
        <span className="mr-1 h-full w-px bg-[#b9bec9]" />
      </div>
    </footer>
  );
}

export default function App() {
  return (
    <div className="flex h-screen flex-col overflow-hidden font-['Noto_Sans',sans-serif]">
      <header>
        <TabStrip />
        <AddressRow />
        <Bookmarks />
      </header>
      <div className="flex min-h-0 flex-1 flex-col font-['Inter',sans-serif] text-[10px] leading-4">
        <Toolbar />
        <div className="flex min-h-0 flex-1">
          <LayersPanel />
          <Canvas />
          <DesignPanel />
        </div>
      </div>
      <Taskbar />
    </div>
  );
}
